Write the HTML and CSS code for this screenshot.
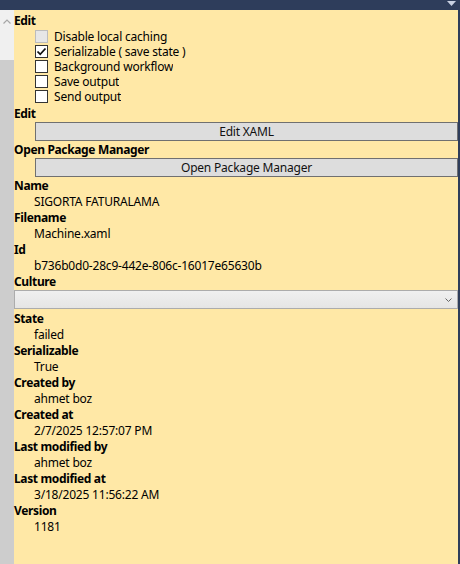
FILE: index.html
```html
<!DOCTYPE HTML><html>
<head>
  <title>Workflow Properties</title>
  <meta charset="UTF-8">
  <link rel="stylesheet" href="styles.css">
</head>
<body>
  <div class="titlebar">
    <svg class="drop" width="9" height="5" viewBox="0 0 9 5"><path d="M0 0H9L4.5 5Z" fill="#c9d1e2"/></svg>
  </div>
  <div class="main">
    <div class="scrollbar">
      <div class="track">
        <svg class="up" width="8" height="5" viewBox="0 0 8 5"><path d="M0.5 4.5L4 1L7.5 4.5" fill="none" stroke="#a6a6a6" stroke-width="1.2"/></svg>
      </div>
      <div class="thumb"></div>
    </div>
    <div class="panel">
      <div class="label first">Edit</div>
      <div class="checks">
        <label class="check"><span class="box disabled"></span><span class="ctext">Disable local caching</span></label>
        <label class="check"><span class="box"><svg width="11" height="11" viewBox="0 0 11 11"><path d="M1.5 5.5L4.2 8.3L9.5 2.5" fill="none" stroke="#111" stroke-width="1.8"/></svg></span><span class="ctext">Serializable ( save state )</span></label>
        <label class="check"><span class="box"></span><span class="ctext">Background workflow</span></label>
        <label class="check"><span class="box"></span><span class="ctext">Save output</span></label>
        <label class="check"><span class="box"></span><span class="ctext">Send output</span></label>
      </div>

      <div class="label">Edit</div>
      <button class="btn">Edit XAML</button>
      <div class="label">Open Package Manager</div>
      <button class="btn">Open Package Manager</button>

      <div class="label">Name</div>
      <div class="value">SIGORTA FATURALAMA</div>
      <div class="label">Filename</div>
      <div class="value">Machine.xaml</div>
      <div class="label">Id</div>
      <div class="value">b736b0d0-28c9-442e-806c-16017e65630b</div>
      <div class="label">Culture</div>
      <div class="combo">
        <svg width="7" height="4" viewBox="0 0 7 4"><path d="M0.5 0.5L3.5 3.5L6.5 0.5" fill="none" stroke="#666" stroke-width="1"/></svg>
      </div>
      <div class="label">State</div>
      <div class="value">failed</div>
      <div class="label">Serializable</div>
      <div class="value">True</div>
      <div class="label">Created by</div>
      <div class="value">ahmet boz</div>
      <div class="label">Created at</div>
      <div class="value">2/7/2025 12:57:07 PM</div>
      <div class="label">Last modified by</div>
      <div class="value">ahmet boz</div>
      <div class="label">Last modified at</div>
      <div class="value">3/18/2025 11:56:22 AM</div>
      <div class="label">Version</div>
      <div class="value">1181</div>
    </div>
  </div>
</body>
</html>
```

FILE: styles.css
```css
html, body {margin: 0; padding: 0; height: 100%;}
body {
	background: #2e3d5b;
	font-family: "Noto Sans", "Open Sans", sans-serif;
	font-size: 12px;
	letter-spacing: -0.2px;
	color: #000;
	overflow: hidden;
}

.titlebar {
	height: 10px;
	position: relative;
}
.titlebar .drop {position: absolute; right: 4px; top: 1px;}

.main {
	display: flex;
	height: 554px;
	margin-right: 2px;
}

.scrollbar {
	width: 14px;
	display: flex;
	flex-direction: column;
}
.scrollbar .track {
	height: 50px;
	background: #f0f0f0;
	display: flex;
	justify-content: center;
	padding-top: 9px;
	box-sizing: border-box;
}
.scrollbar .thumb {flex: 1; background: #cdcdcd;}

.panel {
	flex: 1;
	background: #ffe8a6;
	padding-top: 3px;
	display: flex;
	flex-direction: column;
}

.label {
	font-weight: bold;
	letter-spacing: -0.35px;
	line-height: 16px;
	height: 16px;
}

.value {
	line-height: 16px;
	height: 16px;
	padding-left: 20px;
}

.checks {margin-bottom: 2px;}
.check {
	display: flex;
	align-items: center;
	height: 15px;
	line-height: 15px;
	padding-left: 21px;
}
.ctext {display: block; height: 15px; overflow: hidden;}
.box {
	width: 11px;
	height: 11px;
	border: 1px solid #333;
	background: #fff;
	margin-right: 6px;
	display: flex;
	align-items: center;
	justify-content: center;
}
.box.disabled {background: #e6e6e6; border-color: #bcbcbc;}

.btn {
	margin: 0 0 1px 21px;
	height: 19px;
	padding: 0;
	background: #dddddd;
	border: 1px solid #707070;
	font-family: inherit;
	font-size: 12px;
	letter-spacing: -0.2px;
	color: #111;
	line-height: 17px;
}

.combo {
	height: 19px;
	box-sizing: border-box;
	border: 1px solid #acacac;
	background: linear-gradient(#f0f0f0, #e5e5e5);
	display: flex;
	align-items: center;
	justify-content: flex-end;
	padding-right: 5px;
	margin: 0 0 2px 0;
}
```
